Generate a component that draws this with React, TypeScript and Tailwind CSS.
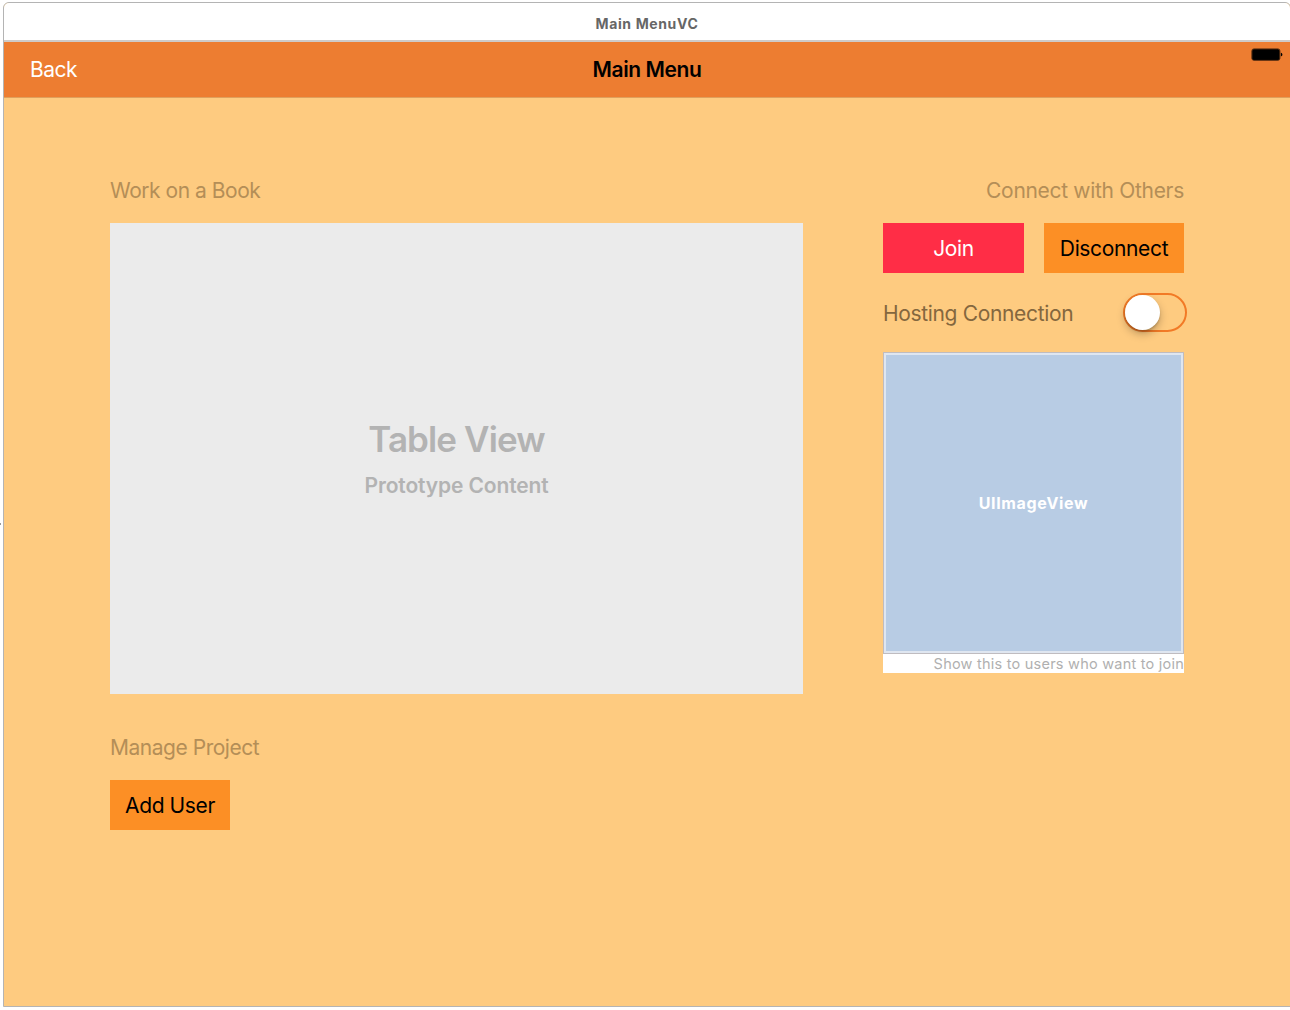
import type { ReactNode } from "react";

function TitleBar() {
  return (
    <div className="flex h-[39px] shrink-0 items-center justify-center border-b-2 border-[#cfcbc8] bg-white pt-[5px] text-[14px] leading-5 font-bold text-[#666666]">
      <span className="tracking-[0.62px]">Main MenuVC</span>
    </div>
  );
}

function Battery() {
  return (
    <svg width="32" height="14" viewBox="0 0 32 14" aria-hidden="true">
      <rect x="0.9" y="0.9" width="28" height="11.4" rx="2" fill="#000" stroke="#5a2f12" strokeWidth="1" />
      <rect x="2" y="2" width="26" height="9.4" rx="0.8" fill="#000" />
      <path d="M29.9 4.8c1 .2 1.5.9 1.5 1.8s-.5 1.600-1.500 1.800z" fill="#000" />
    </svg>
  );
}

function NavBar() {
  return (
    <nav className="grid h-14 shrink-0 grid-cols-3 border-b border-[#dfa05c] bg-[#ed7d31] text-[21px] leading-[56px]">
      <span className="pl-[26px] tracking-[-0.5px] text-white">Back</span>
      <span className="text-center font-semibold tracking-[-0.4px] text-black">Main Menu</span>
      <span className="flex items-start justify-end pt-[6px] pr-[7px]">
        <Battery />
      </span>
    </nav>
  );
}

function Heading({ children, className }: { children: ReactNode; className: string }) {
  return <h2 className={`h-7 text-[21px] leading-7 whitespace-nowrap text-[#b48e57] ${className}`}>{children}</h2>;
}

function Button({ children, className }: { children: ReactNode; className: string }) {
  return (
    <button className={`flex h-[50px] items-center justify-center pt-[2px] text-[21px] leading-7 whitespace-nowrap ${className}`}>
      {children}
    </button>
  );
}

function Switch() {
  return (
    <div className="h-[39px] w-[64px] rounded-full border-2 border-[#f27a26]">
      <div className="h-[35px] w-[35px] rounded-full bg-white shadow-[0_4px_8px_rgba(0,0,0,0.25),0_2px_2px_rgba(0,0,0,0.15)]" />
    </div>
  );
}

export default function App() {
  return (
    <div className="relative h-[1010px] w-[1290px] overflow-hidden bg-white pt-[2px] pl-[3px] font-['Inter',sans-serif]">
      <div className="absolute top-[523px] left-0 h-[2px] w-px bg-[#999999]" />
      <div className="flex h-[1005px] w-[1288px] flex-col overflow-hidden rounded-t-[6px] border border-[#b4b4b4] bg-[#fecb80]">
        <TitleBar />
        <NavBar />
        <main className="flex gap-20 pt-[79px] pl-[106px]">
          <section className="w-[693px]">
            <Heading className="tracking-[-0.47px]">Work on a Book</Heading>
            <div className="mt-[18px] flex h-[471px] flex-col items-center bg-[#ebebeb] pt-[194px] font-semibold text-[#b3b3b3]">
              <p className="text-[35px] leading-11 tracking-[-0.88px]">Table View</p>
              <p className="mt-[11px] text-[21px] leading-7 tracking-[-0.13px]">Prototype Content</p>
            </div>
            <Heading className="mt-10 tracking-[-0.47px]">Manage Project</Heading>
            <Button className="mt-[18px] w-[120px] bg-[#fc8f25] tracking-[-0.4px] text-black">Add User</Button>
          </section>
          <section className="w-[301px]">
            <Heading className="text-right tracking-[-0.31px]">Connect with Others</Heading>
            <div className="mt-[18px] flex justify-between">
              <Button className="w-[141px] bg-[#ff2d46] tracking-[-0.4px] text-white">Join</Button>
              <Button className="w-[140px] bg-[#fc8f25] tracking-[-0.35px] text-black">Disconnect</Button>
            </div>
            <div className="mt-5 -mr-[3px] flex h-[39px] items-center justify-between">
              <span className="pt-[2px] text-[21px] leading-7 tracking-[-0.34px] text-[#84673e]">Hosting Connection</span>
              <Switch />
            </div>
            <div className="mt-5 h-[302px] border border-[#bfbcc0] bg-[#dfe6f0] p-[2px]">
              <div className="flex h-full items-center justify-center bg-[#b8cce4] text-[16px] font-bold text-white">
                <span className="tracking-[0.65px]">UIImageView</span>
              </div>
            </div>
            <p className="h-[19px] bg-white text-right text-[14.5px] leading-[19px] whitespace-nowrap tracking-[0.23px] text-[#b0b0b0]">
              Show this to users who want to join
            </p>
          </section>
        </main>
      </div>
    </div>
  );
}
